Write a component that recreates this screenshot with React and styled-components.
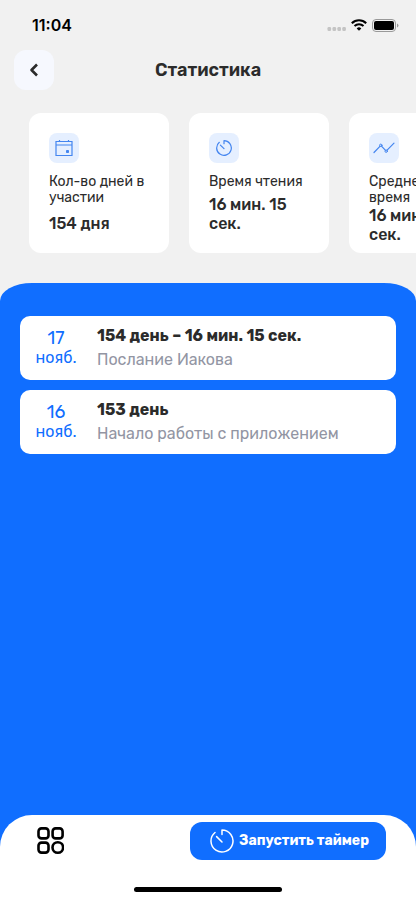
import React from 'react';
import styled, { createGlobalStyle, ThemeProvider } from 'styled-components';

const theme = {
  bg: {
    page: '#f1f1f1',
    card: '#ffffff',
    accent: '#106eff',
    iconBg: '#e5efff',
    backBg: '#f6f8fe',
  },
  colors: {
    text: '#2b2b2b',
    muted: '#9295a3',
    accent: '#106eff',
    icon: '#4385f0',
  },
};

const GlobalStyle = createGlobalStyle`
  * {
    box-sizing: border-box;
  }
  body {
    margin: 0;
    font-family: Rubik, Inter, Roboto, sans-serif;
    color: ${({ theme }) => theme.colors.text};
    background-color: ${({ theme }) => theme.bg.page};
  }
`;

const StyledScreen = styled.div`
  min-height: 100vh;
  display: flex;
  flex-direction: column;
  overflow: hidden;
`;

const StyledStatusBar = styled.div`
  height: 50px;
  padding: 0 17px 0 32px;
  display: flex;
  justify-content: space-between;
  align-items: center;
  color: #000;
  font-family: Inter, sans-serif;
  font-size: 16px;
  line-height: 20px;
  font-weight: 600;
`;

const StyledStatusIcons = styled.div`
  display: flex;
  align-items: center;
  gap: 5px;
`;

const StyledHeader = styled.header`
  padding: 0 14px;
  display: grid;
  grid-template-columns: 40px 1fr 40px;
  align-items: center;
`;

const StyledBackButton = styled.button`
  width: 40px;
  height: 40px;
  padding: 0;
  border: none;
  border-radius: 12px;
  display: flex;
  justify-content: center;
  align-items: center;
  background-color: ${({ theme }) => theme.bg.backBg};
  color: inherit;
`;

const StyledTitle = styled.h1`
  margin: 0;
  text-align: center;
  font-size: 18px;
  line-height: 24px;
  font-weight: 600;
`;

const StyledCards = styled.div`
  padding: 23px 29px 30px;
  display: flex;
  gap: 20px;
  overflow-x: auto;
  scrollbar-width: none;
`;

const StyledCard = styled.section`
  flex: 0 0 140px;
  height: 140px;
  padding: 20px;
  border-radius: 12px;
  display: flex;
  flex-direction: column;
  background-color: ${({ theme }) => theme.bg.card};
`;

const StyledCardIcon = styled.div`
  width: 30px;
  height: 30px;
  flex-shrink: 0;
  margin-bottom: 11px;
  border-radius: 8px;
  display: flex;
  justify-content: center;
  align-items: center;
  background-color: ${({ theme }) => theme.bg.iconBg};
  color: ${({ theme }) => theme.colors.icon};
`;

const StyledCardBody = styled.div`
  min-height: 59px;
  display: flex;
  flex-direction: column;
  justify-content: space-between;
`;

const StyledCardLabel = styled.div`
  font-size: 14px;
  line-height: 16px;
`;

const StyledCardValue = styled.div`
  font-size: 16px;
  line-height: 19px;
  font-weight: 500;
`;

const StyledPanel = styled.main`
  flex: 1;
  display: flex;
  flex-direction: column;
  justify-content: space-between;
  border-radius: 32px 32px 0 0 / 18px 18px 0 0;
  background-color: ${({ theme }) => theme.bg.accent};
`;

const StyledHistory = styled.ul`
  margin: 0;
  padding: 33px 20px;
  display: flex;
  flex-direction: column;
  gap: 10px;
  list-style: none;
`;

const StyledEntry = styled.li`
  padding: 8px 16px 8px 0;
  border-radius: 10px;
  display: grid;
  grid-template-columns: 72px 1fr;
  column-gap: 5px;
  align-items: center;
  background-color: ${({ theme }) => theme.bg.card};
`;

const StyledDate = styled.div`
  line-height: 20px;
  color: ${({ theme }) => theme.colors.accent};
  text-align: center;
`;

const StyledDay = styled.div`
  font-size: 18px;
`;

const StyledMonth = styled.div`
  font-size: 16px;
`;

const StyledEntryTitle = styled.div`
  font-size: 16px;
  line-height: 24px;
  font-weight: 700;
`;

const StyledEntryText = styled.div`
  font-size: 16px;
  line-height: 24px;
  color: ${({ theme }) => theme.colors.muted};
`;

const StyledFooter = styled.footer`
  padding: 7px 0 8px;
  border-radius: 32px 32px 0 0;
  background-color: ${({ theme }) => theme.bg.card};
`;

const StyledNav = styled.nav`
  padding: 0 30px 0 36px;
  display: flex;
  justify-content: space-between;
  align-items: center;
`;

const StyledMenuButton = styled.button`
  padding: 0;
  border: none;
  display: flex;
  background-color: transparent;
  color: #000;
`;

const StyledTimerButton = styled.button`
  height: 38px;
  padding: 0 17px 0 20px;
  border: none;
  border-radius: 12px;
  display: flex;
  justify-content: center;
  align-items: center;
  gap: 5px;
  background-color: ${({ theme }) => theme.bg.accent};
  color: #fff;
  font-family: inherit;
  font-size: 14px;
  line-height: 20px;
  font-weight: 700;
  white-space: nowrap;
`;

const StyledHomeIndicator = styled.div`
  width: 148px;
  height: 5px;
  margin: 27px auto 0;
  border-radius: 3px;
  background-color: #000;
`;

const SignalDots = () => (
  <svg width="19" height="14" viewBox="0 0 19 14" fill="#c4c4c4">
    <rect x="0.5" y="9" width="3.6" height="4" rx="1.2" />
    <rect x="5.5" y="9" width="3.6" height="4" rx="1.2" />
    <rect x="10.4" y="9" width="3.6" height="4" rx="1.2" />
    <rect x="15.3" y="9" width="3.6" height="4" rx="1.2" />
  </svg>
);

const WifiIcon = () => (
  <svg width="16" height="12" viewBox="0 0 16 12" fill="none" stroke="#000">
    <path d="M0.8 4.2a10.4 10.4 0 0 1 14.4 0" strokeWidth="2.1" />
    <path d="M3.5 7a6.5 6.5 0 0 1 9 0" strokeWidth="2" />
    <path d="M8 11.8 5.7 9.4a3.3 3.3 0 0 1 4.6 0Z" fill="#000" stroke="none" />
  </svg>
);

const BatteryIcon = () => (
  <svg width="27" height="13" viewBox="0 0 27 13">
    <rect x="0.5" y="0.5" width="23" height="12" rx="3.5" fill="none" stroke="#999" />
    <rect x="2" y="2" width="20" height="9" rx="2" fill="#000" />
    <path d="M25 4.5v4a2.1 2.1 0 0 0 0-4Z" fill="#999" />
  </svg>
);

const BackIcon = () => (
  <svg width="10" height="14" viewBox="0 0 10 14" fill="none" stroke="currentColor" strokeWidth="2.6">
    <path d="M8 1.5 2.5 7 8 12.5" strokeLinejoin="round" />
  </svg>
);

const CalendarIcon = () => (
  <svg width="18" height="18" viewBox="0 0 18 18" fill="none" stroke="currentColor">
    <path d="M1 2.5h16v14H1ZM1 6h16M4.5 1v1.5M13.5 1v1.5" strokeWidth="1.2" />
    <rect x="11" y="11" width="3" height="3" rx="0.8" fill="currentColor" stroke="none" />
  </svg>
);

const TimerIcon = ({ size, strokeWidth }) => (
  <svg
    width={size}
    height={size}
    viewBox="0 0 24 24"
    fill="none"
    stroke="currentColor"
    strokeWidth={strokeWidth}
    strokeLinecap="round"
    strokeLinejoin="round"
  >
    <path d="M12 5.6V1a11 11 0 1 1-7 2.5" />
    <path d="M6.6 7.6 12 13" />
  </svg>
);

const ChartIcon = () => (
  <svg width="22" height="12" viewBox="0 0 22 12" fill="none" stroke="currentColor" strokeLinecap="round">
    <path d="M1 10.5 6.9 4.3M8.7 4.3 12.3 8.2M14.1 8.2 21 1.2" strokeWidth="1.2" />
    <circle cx="7.8" cy="3.3" r="1.2" />
    <circle cx="13.2" cy="9.2" r="1.2" />
  </svg>
);

const GridIcon = () => (
  <svg width="28" height="28" viewBox="0 0 28 28" fill="none" stroke="currentColor" strokeWidth="2.6">
    <rect x="2.5" y="1.4" width="10" height="10" rx="3" />
    <rect x="16.6" y="1.4" width="10" height="10" rx="3" />
    <rect x="2.5" y="15.6" width="10" height="10" rx="3" />
    <circle cx="21.8" cy="20.5" r="5.3" />
  </svg>
);

const stats = [
  {
    label: 'Кол-во дней в участии',
    value: '154 дня',
    icon: <CalendarIcon />,
  },
  {
    label: 'Время чтения',
    value: '16 мин. 15 сек.',
    icon: <TimerIcon size={16} strokeWidth={1.8} />,
  },
  {
    label: 'Среднее время',
    value: '16 мин. 15 сек.',
    icon: <ChartIcon />,
  },
];

const history = [
  {
    day: '17',
    month: 'нояб.',
    title: '154 день – 16 мин. 15 сек.',
    text: 'Послание Иакова',
  },
  {
    day: '16',
    month: 'нояб.',
    title: '153 день',
    text: 'Начало работы с приложением',
  },
];

const StatCard = ({ label, value, icon }) => (
  <StyledCard>
    <StyledCardIcon>{icon}</StyledCardIcon>
    <StyledCardBody>
      <StyledCardLabel>{label}</StyledCardLabel>
      <StyledCardValue>{value}</StyledCardValue>
    </StyledCardBody>
  </StyledCard>
);

const HistoryEntry = ({ day, month, title, text }) => (
  <StyledEntry>
    <StyledDate>
      <StyledDay>{day}</StyledDay>
      <StyledMonth>{month}</StyledMonth>
    </StyledDate>
    <div>
      <StyledEntryTitle>{title}</StyledEntryTitle>
      <StyledEntryText>{text}</StyledEntryText>
    </div>
  </StyledEntry>
);

const App = () => (
  <ThemeProvider theme={theme}>
    <GlobalStyle />
    <StyledScreen>
      <StyledStatusBar>
        <span>11:04</span>
        <StyledStatusIcons>
          <SignalDots />
          <WifiIcon />
          <BatteryIcon />
        </StyledStatusIcons>
      </StyledStatusBar>
      <StyledHeader>
        <StyledBackButton aria-label="Назад">
          <BackIcon />
        </StyledBackButton>
        <StyledTitle>Статистика</StyledTitle>
      </StyledHeader>
      <StyledCards>
        {stats.map((stat) => (
          <StatCard key={stat.label} {...stat} />
        ))}
      </StyledCards>
      <StyledPanel>
        <StyledHistory>
          {history.map((entry) => (
            <HistoryEntry key={entry.day} {...entry} />
          ))}
        </StyledHistory>
        <StyledFooter>
          <StyledNav>
            <StyledMenuButton aria-label="Меню">
              <GridIcon />
            </StyledMenuButton>
            <StyledTimerButton>
              <TimerIcon size={24} strokeWidth={1.5} />
              Запустить таймер
            </StyledTimerButton>
          </StyledNav>
          <StyledHomeIndicator />
        </StyledFooter>
      </StyledPanel>
    </StyledScreen>
  </ThemeProvider>
);

export default App;
